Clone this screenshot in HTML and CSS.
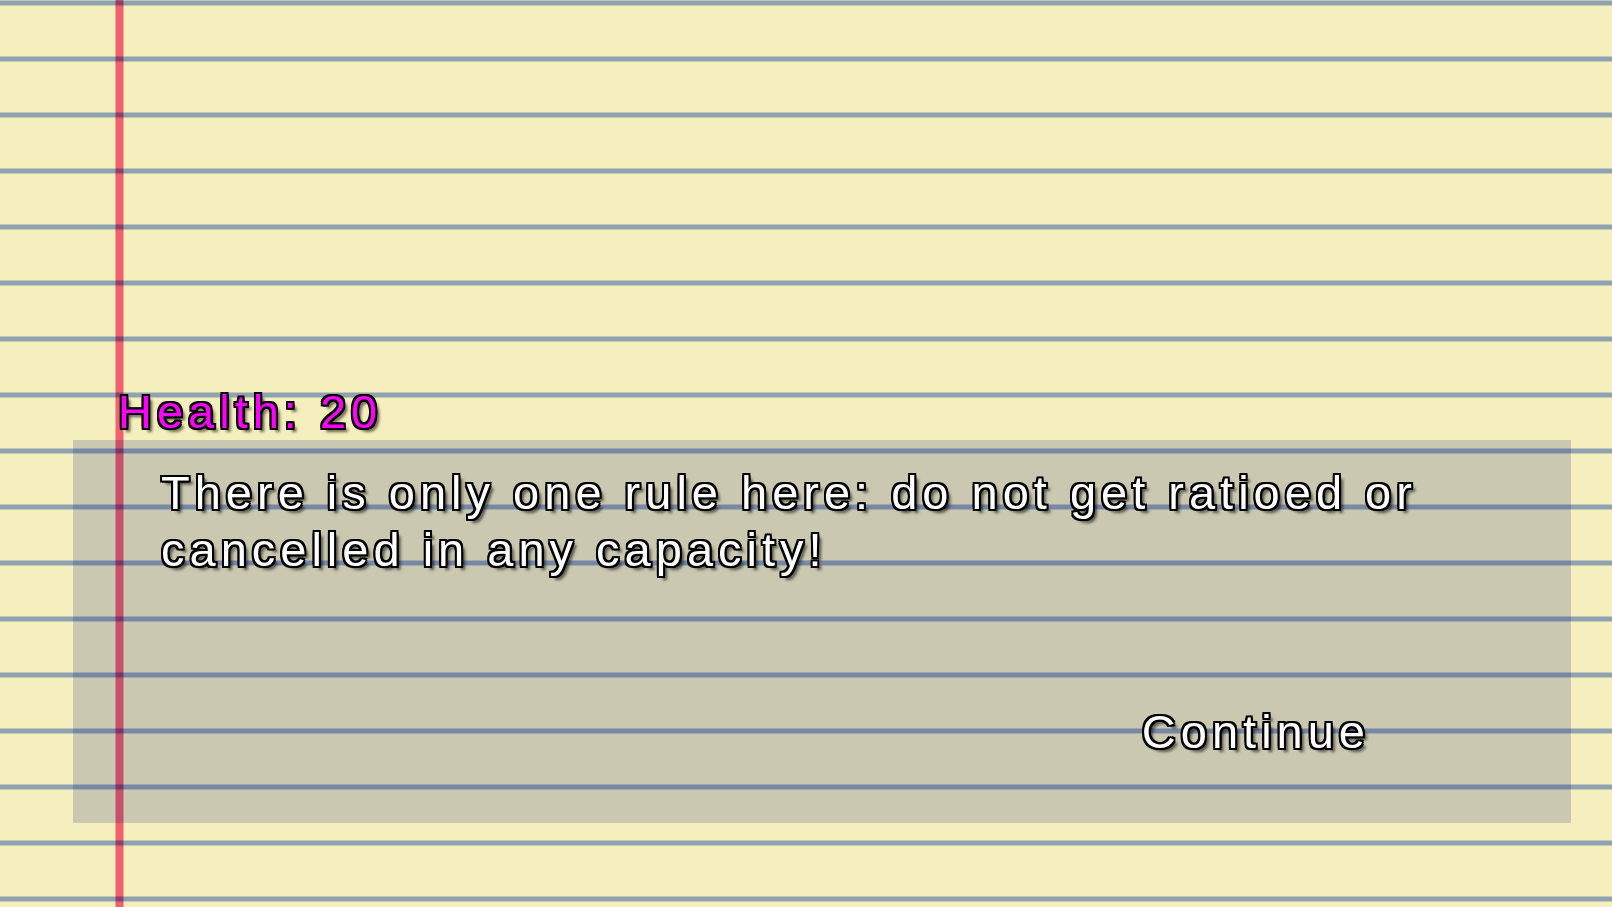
FILE: index.html
```html
<!DOCTYPE html>
<html lang="en">
<head>
<meta charset="utf-8">
<title>Dialog</title>
<link rel="stylesheet" href="styles.css">
</head>
<body>
<div class="page">
  <div class="hud">Health: 20</div>
  <div class="dialog">
    <p class="msg">There is only one rule here: do not get ratioed or cancelled in any capacity!</p>
    <div class="actions"><span class="continue">Continue</span></div>
  </div>
</div>
</body>
</html>
```

FILE: styles.css
```css
html, body {
  margin: 0;
  padding: 0;
}

.page {
  box-sizing: border-box;
  width: 100%;
  height: 100vh;
  min-height: 907px;
  display: flex;
  flex-direction: column;
  justify-content: flex-end;
  padding-bottom: 84px;
  overflow: hidden;
  font-family: "Liberation Sans", Arial, sans-serif;
  background-color: #f5efbd;
  background-image:
    repeating-linear-gradient(180deg,
      rgba(150,172,236,0) 0px,
      #96acec 1px,
      #96acec 5px,
      rgba(150,172,236,0) 6px,
      rgba(150,172,236,0) 56px),
    linear-gradient(90deg,
      rgba(250,102,151,0) 115px,
      #fa6697 116px,
      #fa6697 123px,
      rgba(250,102,151,0) 124px);
  background-repeat: repeat, no-repeat;
  background-size: 100% 56px, 100% 100%;
  background-blend-mode: multiply, multiply;
}

.hud,
.msg,
.continue {
  font-size: 47px;
  letter-spacing: 5px;
  text-shadow:
    -2px -2px 0 #000,
    2px -2px 0 #000,
    -2px 2px 0 #000,
    2px 2px 0 #000,
    0 -2px 0 #000,
    0 2px 0 #000,
    -2px 0 0 #000,
    2px 0 0 #000,
    4px 4px 3px rgba(0,0,0,0.6);
}

.hud {
  margin-left: 118px;
  margin-bottom: 2px;
  line-height: 52px;
  color: #ff00ff;
}

.dialog {
  position: relative;
  box-sizing: border-box;
  margin-left: 73px;
  width: 1498px;
  height: 383px;
  display: flex;
  flex-direction: column;
  padding: 24px 40px 65px 88px;
}

.dialog::before {
  content: "";
  position: absolute;
  top: 0;
  right: 0;
  bottom: 0;
  left: 0;
  background: #d3d6ef;
  mix-blend-mode: multiply;
}

.msg {
  position: relative;
  margin: 0;
  max-width: 1320px;
  line-height: 57px;
  color: #fff;
}

.actions {
  position: relative;
  margin-top: auto;
  padding-right: 161px;
  display: flex;
  justify-content: flex-end;
}

.continue {
  line-height: 52px;
  color: #fff;
  cursor: pointer;
}
```
